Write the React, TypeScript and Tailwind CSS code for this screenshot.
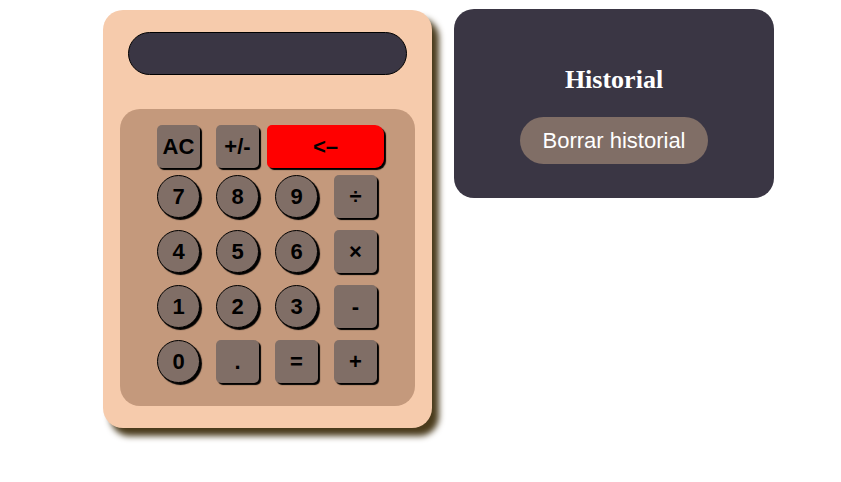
const keyBase =
  "h-[43px] w-[43px] bg-[#806e66] text-black font-bold text-[22px] shadow-[2px_2px_1px_#000] flex items-center justify-center";

const rows: { label: string; round: boolean }[][] = [
  [
    { label: "7", round: true },
    { label: "8", round: true },
    { label: "9", round: true },
    { label: "÷", round: false },
  ],
  [
    { label: "4", round: true },
    { label: "5", round: true },
    { label: "6", round: true },
    { label: "×", round: false },
  ],
  [
    { label: "1", round: true },
    { label: "2", round: true },
    { label: "3", round: true },
    { label: "-", round: false },
  ],
  [
    { label: "0", round: true },
    { label: ".", round: false },
    { label: "=", round: false },
    { label: "+", round: false },
  ],
];

export default function App() {
  return (
    <div className="min-h-[482px] bg-white flex items-start gap-[22px] pl-[103px] pt-[9px] font-['Liberation_Sans',Arial,sans-serif]">
      {/* Calculadora */}
      <div className="mt-px w-[329px] h-[418px] rounded-[20px] bg-[#f6cbac] shadow-[7px_8px_6px_#4a3b1c] flex flex-col items-center pt-[22px]">
        <div className="w-[279px] h-[43px] rounded-full bg-[#3a3644] border border-black" />

        <div className="mt-[34px] w-[295px] h-[297px] rounded-[20px] bg-[#c4997c] pt-[16px] pl-[37px]">
          <div className="flex">
            <button className={`${keyBase} rounded-[5px]`}>AC</button>
            <button className={`${keyBase} rounded-[5px] ml-[16px]`}>+/-</button>
            <button className="ml-[8px] h-[43px] w-[117px] rounded-[5px] rounded-r-[9px] bg-[#ff0000] text-black font-bold text-[22px] shadow-[2px_2px_1px_#000] flex items-center justify-center">
              &lt;–
            </button>
          </div>

          <div className="mt-[7px] grid grid-cols-[repeat(4,43px)] gap-x-[16px] gap-y-[12px]">
            {rows.flat().map((k) => (
              <button
                key={k.label}
                className={`${keyBase} ${k.round ? "rounded-full border border-black" : "rounded-[5px]"}`}
              >
                {k.label}
              </button>
            ))}
          </div>
        </div>
      </div>

      {/* Historial */}
      <div className="w-[320px] h-[189px] rounded-[20px] bg-[#3a3644] flex flex-col items-center pt-[56px]">
        <h2 className="text-white font-bold text-[26px] leading-[30px] font-['Liberation_Serif','Times_New_Roman',serif]">
          Historial
        </h2>
        <button className="mt-[22px] w-[188px] h-[47px] rounded-full bg-[#806e66] text-white text-[22px]">
          Borrar historial
        </button>
      </div>
    </div>
  );
}
